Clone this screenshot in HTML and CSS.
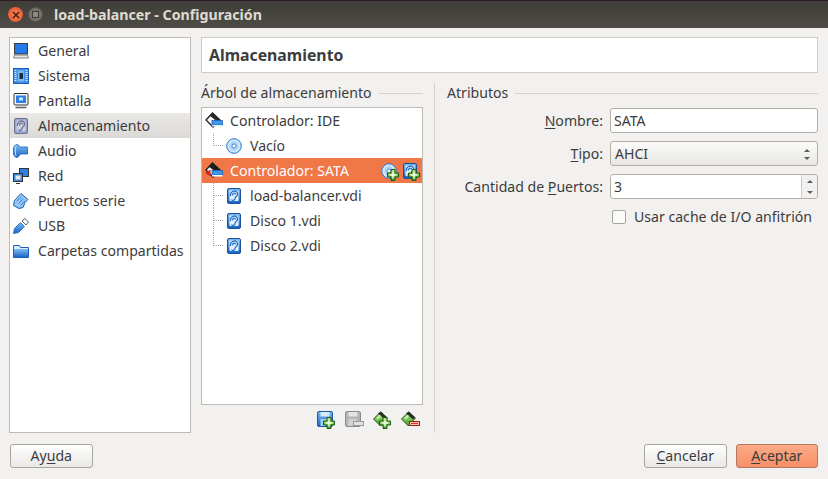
FILE: index.html
```html
<!DOCTYPE html>
<html>

<head>
    <meta charset="utf-8" />
    <title>load-balancer - Configuración</title>
    <link rel="stylesheet" href="styles.css">
</head>

<body>
    <svg class="defs" width="0" height="0">
        <defs>
            <linearGradient id="blue" x1="0" y1="0" x2="0" y2="1">
                <stop offset="0" stop-color="#7cbcf4" />
                <stop offset="1" stop-color="#1a62c4" />
            </linearGradient>
            <linearGradient id="green" x1="0" y1="0" x2="0" y2="1">
                <stop offset="0" stop-color="#b4ea80" />
                <stop offset="1" stop-color="#3f9a2a" />
            </linearGradient>
            <symbol id="i-general" viewBox="0 0 16 16">
                <rect x="1.500" y=".5" width="13" height="10.500" fill="#2379e6" stroke="#3a3a3a" />
                <path d="M1.500 12h13l1 3H.5z" fill="#e4e4e4" stroke="#6a6a6a" stroke-width=".8" />
            </symbol>
            <symbol id="i-sistema" viewBox="0 0 16 16">
                <rect x=".5" y=".5" width="15" height="15" fill="#3f8fe8" stroke="#1a5fb8" />
                <path d="M2.500 2v12M13.500 2v12" stroke="#d5ecff" stroke-dasharray="1 1" stroke-width="2" />
                <rect x="5" y="2.500" width="6" height="11" fill="#7cb8f0" />
                <rect x="6.500" y="5" width="3.500" height="6" fill="#1b2a3c" />
            </symbol>
            <symbol id="i-pantalla" viewBox="0 0 16 16">
                <rect x="1" y=".5" width="14" height="11.500" rx="1" fill="#f2f4f8" stroke="#333" />
                <rect x="3" y="2.500" width="10" height="7.500" fill="#2a80e4" />
                <rect x="6" y="4.500" width="4" height="3" fill="#cfe6ff" />
                <path d="M2.500 14.500h11" stroke="#666" stroke-width="1.600" />
            </symbol>
            <symbol id="i-disk" viewBox="0 0 16 16">
                <rect x="1.500" y=".5" width="13" height="15" rx="1.500" fill="url(#blue)" stroke="#1a4f9c" />
                <rect x="3.500" y="2.500" width="9" height="10.500" rx="1" fill="#e6f3fd" />
                <path d="M4.500 8c-.5-6 7-6.500 7-2 0 3-2.500 2.500-2.500 4.500s-2.500 2.500-3.500 1M6.500 7.500c0-3 3-3 3-1" fill="none" stroke="#1f6fc8" stroke-width="1.300" />
            </symbol>
            <symbol id="i-disk-grey" viewBox="0 0 16 16">
                <rect x="1.500" y=".5" width="13" height="15" rx="1.500" fill="#9aa6cc" stroke="#6b7290" />
                <rect x="3.500" y="2.500" width="9" height="10.500" rx="1" fill="#ccd2e2" />
                <path d="M4.500 8c-.5-6 7-6.500 7-2 0 3-2.500 2.500-2.500 4.500s-2.500 2.500-3.500 1M6.500 7.500c0-3 3-3 3-1" fill="none" stroke="#6a6f92" stroke-width="1.300" />
            </symbol>
            <symbol id="i-audio" viewBox="0 0 16 16">
                <path d="M.5 4.500c1-2 2-3 4-3l3 2.500h7v7h-7L4.500 14.500c-2 0-3-1-4-3z" fill="url(#blue)" stroke="#1a5fb8" stroke-width=".8" />
                <path d="M3 3c-1 3-1 7 0 10" fill="none" stroke="#cfe6ff" />
            </symbol>
            <symbol id="i-red" viewBox="0 0 16 16">
                <rect x="6.500" y=".5" width="9" height="8" fill="#2f80e4" stroke="#333" />
                <rect x=".5" y="5.500" width="9" height="8" fill="#3b8ae8" stroke="#333" />
                <rect x="2.500" y="7.500" width="5" height="4" fill="#e6e6e6" />
                <path d="M3 15.500h4" stroke="#333" />
            </symbol>
            <symbol id="i-serie" viewBox="0 0 16 16">
                <path d="M8 .5l7 6-3 3-2 5-4 1-5.500-3 1-5z" fill="#8fc4f4" stroke="#1d5fb4" />
                <path d="M4 8l4-4M6 10l4-4M8 12l4-4" stroke="#2a76d0" stroke-width=".8" />
            </symbol>
            <symbol id="i-usb" viewBox="0 0 16 16">
                <path d="M.5 15.500l1-5 6-6 4 4-6 6z" fill="url(#blue)" stroke="#1a5fb8" stroke-width=".8" />
                <path d="M9 3l3-2.500 3.500 3.500L13 7z" fill="#fff" stroke="#333" stroke-width=".8" />
            </symbol>
            <symbol id="i-carpeta" viewBox="0 0 16 16">
                <path d="M.5 14.500V2.500h6l1 2h8v10z" fill="#d9ecfb" stroke="#1a5fb8" />
                <rect x="1" y="6" width="14" height="8.500" fill="url(#blue)" />
            </symbol>
            <symbol id="i-ctrl" viewBox="0 0 18 18">
                <path d="M1 8l6.500-7L15 8l-7 7z" fill="#f8f8f8" stroke="#222" stroke-width="1.300" />
                <path d="M4.500 3.500L7.500 .5 15 7.500l-3 2z" fill="#2a2a2a" />
                <rect x="7" y="8.500" width="10.500" height="4.500" fill="#3f9be8" stroke="#1a5fb8" stroke-width=".8" />
                <rect x="7" y="13" width="10.500" height="1.500" fill="#dff0fd" />
            </symbol>
            <symbol id="i-ctrl-sel" viewBox="0 0 18 18">
                <path d="M1 8l6.500-7L15 8l-7 7z" fill="#f8f8f8" stroke="#222" stroke-width="1.300" />
                <path d="M3.500 4.500L7.500 .5 15 7.500l-4 2.500z" fill="#1e1e1e" />
                <path d="M0 11l5.500-3.500v7z" fill="#d6281c" />
                <rect x="7" y="8.500" width="10.500" height="4.500" fill="#3f9be8" stroke="#1a5fb8" stroke-width=".8" />
                <rect x="7" y="13" width="10.500" height="1.500" fill="#fff" />
            </symbol>
            <symbol id="i-cd" viewBox="0 0 16 16">
                <circle cx="8" cy="8" r="7.300" fill="#cfe6fa" stroke="#2a76d0" />
                <circle cx="8" cy="8" r="4.500" fill="#a9d2f5" />
                <circle cx="8" cy="8" r="2" fill="#fff" stroke="#2a76d0" stroke-width=".8" />
            </symbol>
            <symbol id="i-plus" viewBox="0 0 12 12">
                <path d="M4 .5h4v3.500h3.500v4H8v3.500H4V8H.5V4H4z" fill="url(#green)" stroke="#1d5c12" />
                <path d="M6 2.500v7M2.500 6h7" stroke="#f4ffe8" stroke-width="1.400" />
            </symbol>
            <symbol id="i-floppy" viewBox="0 0 16 16">
                <rect x=".5" y=".5" width="15" height="15" rx="1.500" fill="url(#blue)" stroke="#1a55a8" />
                <rect x="3.500" y="1" width="9" height="4.500" fill="#d5ecff" />
                <rect x="3.500" y="8" width="8" height="7" fill="#9fd0f8" />
            </symbol>
            <symbol id="i-floppy-grey" viewBox="0 0 16 16">
                <rect x=".5" y=".5" width="15" height="15" rx="1.500" fill="#b5b5b5" stroke="#8c8c8c" />
                <rect x="3.500" y="1" width="9" height="4.500" fill="#e4e4e4" />
                <rect x="3.500" y="8" width="8" height="7" fill="#d2d2d2" />
            </symbol>
            <symbol id="i-diamond" viewBox="0 0 16 16">
                <path d="M.5 8l7-7 7 6-7 8z" fill="url(#green)" stroke="#23521a" />
                <path d="M5 2.500L8 .5l6 6-2 2z" fill="#2c2c2c" />
                <path d="M4 8l3.500-3.500" stroke="#dff5c8" stroke-width="1.400" />
            </symbol>
        </defs>
    </svg>

    <header class="titlebar">
        <span class="winbtn winbtn-close">
            <svg width="8" height="8" viewBox="0 0 8 8"><path d="M1 1l6 6M7 1L1 7" stroke="#4a1a0c" stroke-width="1.500" /></svg>
        </span>
        <span class="winbtn winbtn-max"><i></i></span>
        <span class="wintitle">load-balancer - Configuración</span>
    </header>

    <div class="dialog">
        <div class="main">
            <ul class="nav">
                <li><svg class="ico"><use href="#i-general" /></svg>General</li>
                <li><svg class="ico"><use href="#i-sistema" /></svg>Sistema</li>
                <li><svg class="ico"><use href="#i-pantalla" /></svg>Pantalla</li>
                <li class="active"><svg class="ico"><use href="#i-disk-grey" /></svg>Almacenamiento</li>
                <li><svg class="ico"><use href="#i-audio" /></svg>Audio</li>
                <li><svg class="ico"><use href="#i-red" /></svg>Red</li>
                <li><svg class="ico"><use href="#i-serie" /></svg>Puertos serie</li>
                <li><svg class="ico"><use href="#i-usb" /></svg>USB</li>
                <li><svg class="ico"><use href="#i-carpeta" /></svg>Carpetas compartidas</li>
            </ul>

            <div class="page">
                <h1 class="page-title">Almacenamiento</h1>
                <div class="columns">
                    <section class="tree-col">
                        <div class="group-title"><span>Árbol de almacenamiento</span><i></i></div>
                        <div class="tree">
                            <div class="row"><svg class="ico-ctrl"><use href="#i-ctrl" /></svg>Controlador: IDE</div>
                            <div class="row child last-before-sel"><svg class="ico"><use href="#i-cd" /></svg>Vacío</div>
                            <div class="row selected">
                                <svg class="ico-ctrl"><use href="#i-ctrl-sel" /></svg>Controlador: SATA
                                <span class="row-actions">
                                    <span class="combo"><svg class="ico"><use href="#i-cd" /></svg><svg class="plus"><use href="#i-plus" /></svg></span>
                                    <span class="combo"><svg class="ico"><use href="#i-disk" /></svg><svg class="plus"><use href="#i-plus" /></svg></span>
                                </span>
                            </div>
                            <div class="row child"><svg class="ico"><use href="#i-disk" /></svg>load-balancer.vdi</div>
                            <div class="row child"><svg class="ico"><use href="#i-disk" /></svg>Disco 1.vdi</div>
                            <div class="row child end"><svg class="ico"><use href="#i-disk" /></svg>Disco 2.vdi</div>
                        </div>
                        <div class="tree-tools">
                            <span class="combo"><svg class="ico"><use href="#i-floppy" /></svg><svg class="plus"><use href="#i-plus" /></svg></span>
                            <span class="combo"><svg class="ico"><use href="#i-floppy-grey" /></svg><i class="minus minus-grey"></i></span>
                            <span class="combo"><svg class="ico"><use href="#i-diamond" /></svg><svg class="plus"><use href="#i-plus" /></svg></span>
                            <span class="combo"><svg class="ico"><use href="#i-diamond" /></svg><i class="minus"></i></span>
                        </div>
                    </section>

                    <section class="attr-col">
                        <div class="group-title"><span>Atributos</span><i></i></div>
                        <div class="form">
                            <label><u>N</u>ombre:</label>
                            <div class="field">SATA</div>
                            <label><u>T</u>ipo:</label>
                            <div class="field select">AHCI
                                <span class="arrows"><i class="up"></i><i class="down"></i></span>
                            </div>
                            <label>Cantidad de <u>P</u>uertos:</label>
                            <div class="field spin">3
                                <span class="spin-btns"><i class="up"></i><i class="down"></i></span>
                            </div>
                            <div class="check"><i class="box"></i>Usar cache de I/O anfitrión</div>
                        </div>
                    </section>
                </div>
            </div>
        </div>

        <footer class="footer">
            <button class="btn">Ay<u>u</u>da</button>
            <div class="footer-right">
                <button class="btn"><u>C</u>ancelar</button>
                <button class="btn btn-ok"><u>A</u>ceptar</button>
            </div>
        </footer>
    </div>
</body>

</html>
```

FILE: styles.css
```css
* {
    box-sizing: border-box;
}

html,
body {
    margin: 0;
    height: 100%;
}

body {
    width: 828px;
    height: 479px;
    overflow: hidden;
    background: #f2f1f0;
    color: #3c3c3c;
    font: 14.100px/20px "Noto Sans", "Open Sans", sans-serif;
}

.defs {
    position: absolute;
}

u {
    text-underline-offset: 2px;
}

/* barre de titre */
.titlebar {
    display: flex;
    align-items: center;
    height: 28px;
    padding-left: 8px;
    background: linear-gradient(#3f3d38, #4e4c46);
    border-top: 1px solid #2c1a26;
}

.winbtn {
    display: flex;
    align-items: center;
    justify-content: center;
    width: 15px;
    height: 15px;
    border-radius: 50%;
}

.winbtn-close {
    background: radial-gradient(#f78a5f, #de4a22);
}

.winbtn-max {
    margin-left: 5px;
    background: #74736d;
    border: 1px solid #55544f;
}

.winbtn-max i {
    width: 7px;
    height: 7px;
    border: 1px solid #3b3a36;
    background: #8c8b85;
}

.wintitle {
    margin-left: 11px;
    color: #dfdbd2;
    font-weight: 700;
    font-size: 14.200px;
}

.dialog {
    padding: 9px 10px 0 9px;
}

.main {
    display: flex;
    height: 396px;
}

/* menu de gauche */
.nav {
    width: 182px;
    margin: 0;
    padding: 0;
    list-style: none;
    background: #fff;
    border: 1px solid #bfbcb6;
}

.nav li {
    display: flex;
    align-items: center;
    height: 25px;
    padding-left: 3px;
    white-space: nowrap;
}

.nav li.active {
    background: linear-gradient(#e9e8e6, #dbdad7);
}

.ico {
    flex: none;
    width: 16px;
    height: 16px;
}

.nav .ico {
    margin-right: 9px;
}

/* partie droite */
.page {
    flex: 1;
    margin-left: 10px;
}

.page-title {
    height: 36px;
    margin: 0;
    padding-left: 7px;
    background: #fff;
    border: 1px solid #cfccc6;
    color: #3c3c3c;
    font-size: 15.800px;
    font-weight: 700;
    line-height: 34px;
}

.columns {
    display: flex;
    height: 360px;
    padding-top: 10px;
}

.tree-col {
    width: 234px;
    padding-right: 11px;
    border-right: 1px solid #d5d2cc;
}

.attr-col {
    flex: 1;
    padding-left: 12px;
}

.group-title {
    display: flex;
    align-items: center;
    height: 20px;
}

.group-title i {
    flex: 1;
    height: 1px;
    margin-left: 7px;
    background: #d5d2cc;
}

.tree {
    width: 222px;
    height: 298px;
    margin-top: 4px;
    background: #fff;
    border: 1px solid #bfbcb6;
}

.row {
    position: relative;
    display: flex;
    align-items: center;
    height: 25px;
    padding-left: 3px;
    white-space: nowrap;
}

.row.child {
    padding-left: 24px;
}

.row.child .ico {
    margin-right: 8px;
}

/* pointillés de l'arbre */
.row.child::before {
    content: "";
    position: absolute;
    left: 11px;
    top: 0;
    bottom: 0;
    width: 10px;
    border-left: 1px dotted #aaa;
}

.row.child::after {
    content: "";
    position: absolute;
    left: 11px;
    top: 12px;
    width: 10px;
    border-top: 1px dotted #aaa;
}

.row.end::before {
    bottom: 12px;
}

.row.last-before-sel::before {
    bottom: 12px;
}

.ico-ctrl {
    flex: none;
    width: 18px;
    height: 18px;
    margin-right: 7px;
}

.selected {
    background: #f07746;
    color: #fff;
}

.row-actions {
    display: flex;
    gap: 5px;
    margin-left: auto;
    margin-right: 4px;
}

.combo {
    position: relative;
    display: block;
    width: 16px;
    height: 16px;
}

.plus {
    position: absolute;
    right: -2px;
    bottom: -2px;
    width: 12px;
    height: 12px;
}

.minus {
    position: absolute;
    right: -3px;
    bottom: 1px;
    width: 11px;
    height: 5px;
    background: #d8341c;
    border: 1px solid #9c1f10;
    box-shadow: inset 0 0 0 1px #f5c4b5;
}

.minus-grey {
    background: #e2e2e2;
    border-color: #9a9a9a;
    box-shadow: none;
}

.tree-tools {
    display: flex;
    justify-content: flex-end;
    gap: 12px;
    padding: 6px 6px 0 0;
}

/* formulaire */
.form {
    display: grid;
    grid-template-columns: 156px 208px;
    grid-auto-rows: 25px;
    row-gap: 8px;
    column-gap: 7px;
    margin-top: 5px;
}

.form label {
    align-self: center;
    text-align: right;
    white-space: nowrap;
}

.field {
    position: relative;
    display: flex;
    align-items: center;
    padding-left: 3px;
    background: #fff;
    border: 1px solid #b3afa8;
    border-radius: 3px;
}

.select {
    padding-left: 4px;
    background: linear-gradient(#fbfbfa, #e8e7e5);
}

.arrows {
    position: absolute;
    top: 7px;
    right: 7px;
    display: flex;
    flex-direction: column;
    gap: 5px;
}

.spin-btns {
    position: absolute;
    top: 0;
    right: 0;
    bottom: 0;
    display: flex;
    flex-direction: column;
    align-items: center;
    justify-content: center;
    gap: 8px;
    width: 16px;
    background: #f2f1f0;
    border-left: 1px solid #cfccc6;
    border-radius: 0 3px 3px 0;
}

.up,
.down {
    width: 0;
    height: 0;
    border-left: 3px solid transparent;
    border-right: 3px solid transparent;
}

.up {
    border-bottom: 3px solid #5c5c5c;
}

.down {
    border-top: 3px solid #5c5c5c;
}

.check {
    grid-column: 2;
    display: flex;
    align-items: center;
    margin-top: -3px;
    height: 25px;
    padding-left: 2px;
    white-space: nowrap;
}

.box {
    width: 14px;
    height: 14px;
    margin-right: 8px;
    background: #fbfbfa;
    border: 1px solid #a9a59e;
    border-radius: 2px;
}

/* boutons du bas */
.footer {
    display: flex;
    justify-content: space-between;
    padding: 11px 0 0 1px;
}

.footer-right {
    display: flex;
    gap: 9px;
}

.btn {
    width: 82.500px;
    height: 24px;
    padding: 0;
    background: linear-gradient(#fefefe, #e9e8e6);
    border: 1px solid #a9a59e;
    border-radius: 3px;
    color: #3c3c3c;
    font: inherit;
}

.btn-ok {
    background: linear-gradient(#fcaa88, #f78f68);
    border-color: #b7775c;
}
```
